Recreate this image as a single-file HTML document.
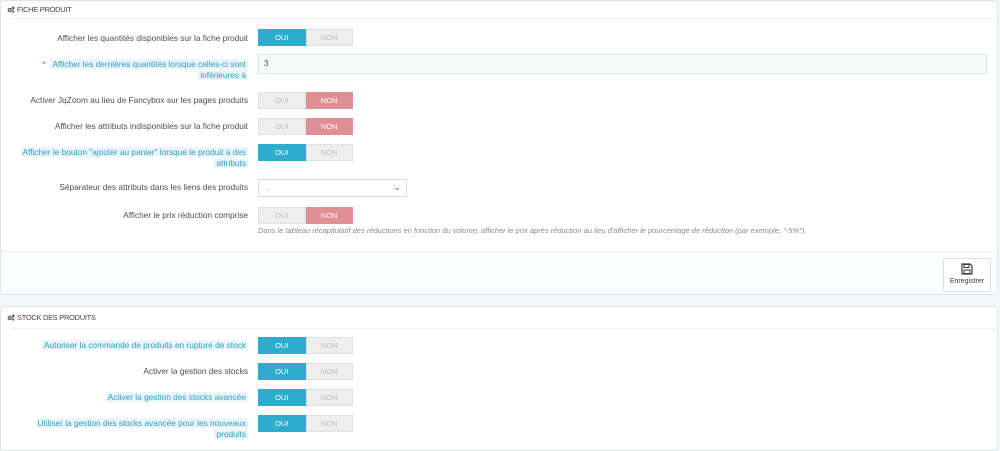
<!DOCTYPE html>
<html><head><meta charset="utf-8"><style>
*{box-sizing:border-box;margin:0;padding:0}
body{width:1000px;height:441px;overflow:hidden;background:#f4f6f7;font-family:"Liberation Sans",sans-serif;font-size:8.3px;color:#4a4e55;position:relative}
.panel{position:absolute;left:0;width:998px;background:#fff;border:1px solid #dbe6e9;border-radius:3px}
.hd{position:absolute;left:6px;font-size:7.5px;color:#444;text-transform:uppercase;letter-spacing:-0.3px}
.hr{position:absolute;left:10px;right:0;height:1px;background:#eef0f2}
.lbl{position:absolute;right:749px;text-align:right;line-height:11px;white-space:nowrap}
.lbl.h span{background:#eaf5fa;color:#2e9ec4;padding:0 2px}
.sw{position:absolute;left:257px;width:95px;height:17px;display:flex;font-size:7.5px}
.sw div{flex:1;display:flex;align-items:center;justify-content:center;color:#bbb;background:#eee;border:1px solid #e0e0e0}
.sw .on{background:#2eacce;color:#fff;border-color:#2eacce}
.sw .no{background:#e08f95;color:#fff;border-color:#e08f95}
.gear{display:inline-block;width:8px;height:7px;vertical-align:-1px;margin-right:2px}
</style></head><body>
<div class="panel" style="top:0;height:295px">
 <div class="hd" style="top:4px"><svg class="gear" viewBox="0 0 8 7"><circle cx="2.8" cy="4" r="2.2" fill="#666"/><circle cx="2.8" cy="4" r="0.8" fill="#fff"/><circle cx="6.2" cy="2" r="1.5" fill="#666"/><circle cx="6.2" cy="5.5" r="1.2" fill="#666"/></svg>FICHE PRODUIT</div>
 <div class="hr" style="top:17px"></div>
 <div class="lbl" style="top:32px">Afficher les quantités disponibles sur la fiche produit</div>
 <div class="sw" style="top:28px"><div class="on">OUI</div><div>NON</div></div>
 <div class="lbl h" style="top:58px"><span style="color:#e23b3b;background:none;margin-right:3px">*</span><span>Afficher les dernières quantités lorsque celles-ci sont</span><br><span>inférieures à</span></div>
 <div style="position:absolute;left:257px;top:53px;width:729px;height:20px;background:#f7fafb;border:1px solid #dbe6e9;padding:4px 5px;font-size:8px">3</div>
 <div class="lbl" style="top:94px">Activer JqZoom au lieu de Fancybox sur les pages produits</div>
 <div class="sw" style="top:91px"><div>OUI</div><div class="no">NON</div></div>
 <div class="lbl" style="top:120px">Afficher les attributs indisponibles sur la fiche produit</div>
 <div class="sw" style="top:117px"><div>OUI</div><div class="no">NON</div></div>
 <div class="lbl h" style="top:146px"><span>Afficher le bouton "ajouter au panier" lorsque le produit a des</span><br><span>attributs</span></div>
 <div class="sw" style="top:143px"><div class="on">OUI</div><div>NON</div></div>
 <div class="lbl" style="top:181px">Séparateur des attributs dans les liens des produits</div>
 <div style="position:absolute;left:257px;top:178px;width:149px;height:18px;background:#fff;border:1px solid #d6dde0;padding:4px 8px;color:#999">-<span style="position:absolute;right:5px;top:2px;color:#555;font-size:9px">⌄</span></div>
 <div class="lbl" style="top:209px">Afficher le prix réduction comprise</div>
 <div class="sw" style="top:206px"><div>OUI</div><div class="no">NON</div></div>
 <div style="position:absolute;left:257px;top:225px;font-size:7.5px;font-style:italic;color:#8a8a8a;white-space:nowrap">Dans le tableau récapitulatif des réductions en fonction du volume, afficher le prix après réduction au lieu d'afficher le pourcentage de réduction (par exemple, "-5%").</div>
 <div style="position:absolute;left:0;right:0;top:250px;bottom:0;background:#fcfdfe;border-top:1px solid #eef0f2"></div>
 <div style="position:absolute;left:942px;top:257px;width:48px;height:34px;background:#fff;border:1px solid #dbe0e2;border-radius:2px;text-align:center;font-size:7px;color:#363a41">
  <svg width="12" height="12" viewBox="0 0 12 12" style="margin-top:4px"><path d="M1 1h8l2 2v8H1z" fill="none" stroke="#363a41" stroke-width="1.2"/><rect x="3" y="1.5" width="5" height="3" fill="none" stroke="#363a41"/><rect x="3" y="7" width="6" height="3.5" fill="none" stroke="#363a41"/></svg>
  <div style="margin-top:1px">Enregistrer</div></div>
</div>
<div class="panel" style="top:306px;height:145px">
 <div class="hd" style="top:6px"><svg class="gear" viewBox="0 0 8 7"><circle cx="2.8" cy="4" r="2.2" fill="#666"/><circle cx="2.8" cy="4" r="0.8" fill="#fff"/><circle cx="6.2" cy="2" r="1.5" fill="#666"/><circle cx="6.2" cy="5.5" r="1.2" fill="#666"/></svg>STOCK DES PRODUITS</div>
 <div class="hr" style="top:21px"></div>
 <div class="lbl h" style="top:33px"><span>Autoriser la commande de produits en rupture de stock</span></div>
 <div class="sw" style="top:30px"><div class="on">OUI</div><div>NON</div></div>
 <div class="lbl" style="top:59px">Activer la gestion des stocks</div>
 <div class="sw" style="top:56px"><div class="on">OUI</div><div>NON</div></div>
 <div class="lbl h" style="top:85px"><span>Activer la gestion des stocks avancée</span></div>
 <div class="sw" style="top:82px"><div class="on">OUI</div><div>NON</div></div>
 <div class="lbl h" style="top:111px"><span>Utiliser la gestion des stocks avancée pour les nouveaux</span><br><span>produits</span></div>
 <div class="sw" style="top:108px"><div class="on">OUI</div><div>NON</div></div>
</div>
</body></html>
